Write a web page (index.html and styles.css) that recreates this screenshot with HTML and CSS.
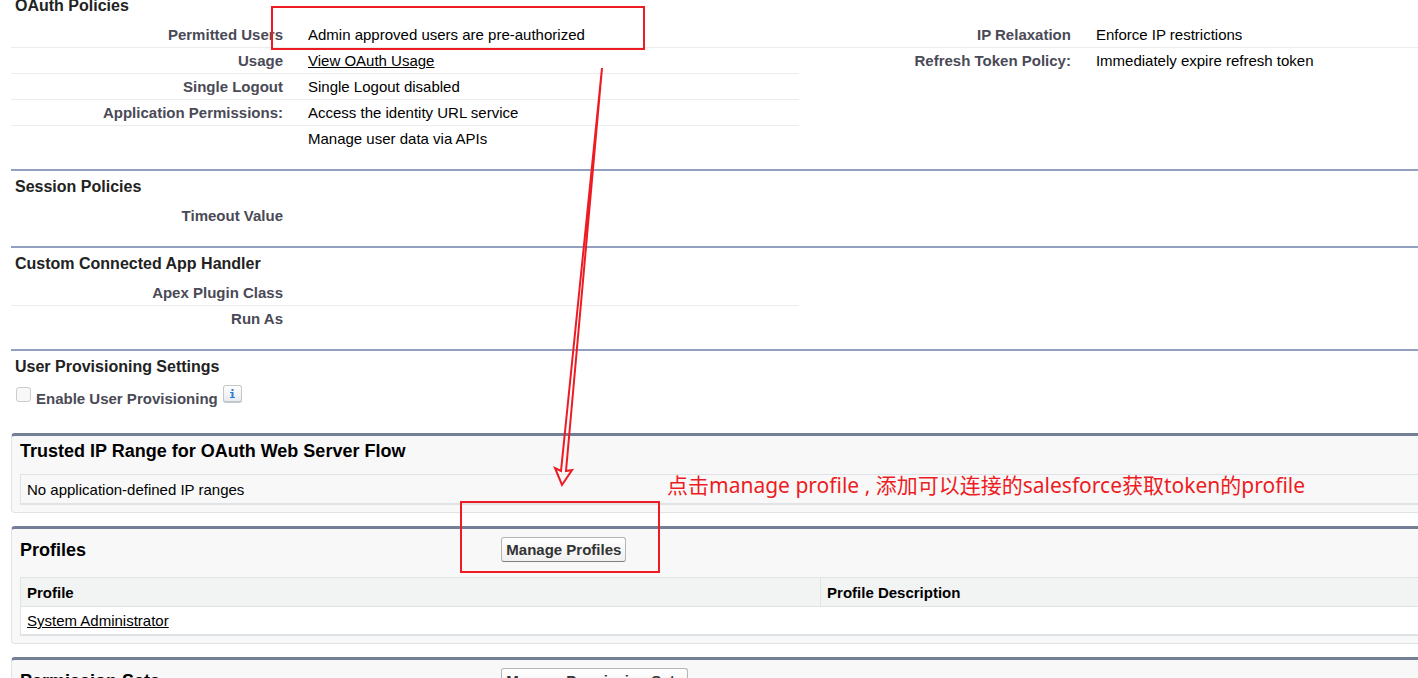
FILE: index.html
```html
<!DOCTYPE html>
<html lang="en">
<head>
<meta charset="utf-8">
<title>Connected App Detail</title>
<link rel="stylesheet" href="styles.css">
</head>
<body>
<main class="page">
  <section class="section">
    <h3 class="section-title">OAuth Policies</h3>
    <div class="columns">
      <dl class="details">
        <div class="row"><dt>Permitted Users</dt><dd>Admin approved users are pre-authorized</dd></div>
        <div class="row"><dt>Usage</dt><dd><a href="#usage">View OAuth Usage</a></dd></div>
        <div class="row"><dt>Single Logout</dt><dd>Single Logout disabled</dd></div>
        <div class="row"><dt>Application Permissions:</dt><dd>Access the identity URL service</dd></div>
        <div class="row"><dt></dt><dd>Manage user data via APIs</dd></div>
      </dl>
      <dl class="details">
        <div class="row"><dt>IP Relaxation</dt><dd>Enforce IP restrictions</dd></div>
        <div class="row"><dt>Refresh Token Policy:</dt><dd>Immediately expire refresh token</dd></div>
      </dl>
    </div>
  </section>

  <section class="section">
    <h3 class="section-title">Session Policies</h3>
    <div class="columns">
      <dl class="details">
        <div class="row"><dt>Timeout Value</dt><dd></dd></div>
      </dl>
    </div>
  </section>

  <section class="section">
    <h3 class="section-title">Custom Connected App Handler</h3>
    <div class="columns">
      <dl class="details">
        <div class="row"><dt>Apex Plugin Class</dt><dd></dd></div>
        <div class="row"><dt>Run As</dt><dd></dd></div>
      </dl>
    </div>
  </section>

  <section class="section section-last">
    <h3 class="section-title">User Provisioning Settings</h3>
    <div class="provisioning">
      <input class="check" type="checkbox" id="provisioning" disabled>
      <label class="check-label" for="provisioning">Enable User Provisioning</label>
      <button class="info" type="button" aria-label="Info">
        <svg width="5" height="9" viewBox="0 0 5 9" aria-hidden="true">
          <path d="M1.500 0h2v2h-2zM0 3h3.500v5H5v1H0V8h1.500V4H0z" fill="#2a7fd4"/>
        </svg>
      </button>
    </div>
  </section>

  <section class="panel">
    <h2 class="panel-title">Trusted IP Range for OAuth Web Server Flow</h2>
    <p class="empty">No application-defined IP ranges</p>
  </section>

  <section class="panel">
    <div class="panel-bar">
      <h2 class="panel-heading">Profiles</h2>
      <div><button class="btn" type="button">Manage Profiles</button></div>
    </div>
    <table class="list">
      <thead><tr><th class="col-name" scope="col">Profile</th><th scope="col">Profile Description</th></tr></thead>
      <tbody><tr><td><a href="#profile">System Administrator</a></td><td></td></tr></tbody>
    </table>
  </section>

  <section class="panel">
    <div class="panel-bar">
      <h2 class="panel-heading">Permission Sets</h2>
      <div><button class="btn" type="button">Manage Permission Sets</button></div>
    </div>
  </section>
</main>

<div class="mark mark-users"></div>
<div class="mark mark-profiles"></div>
<svg class="arrow" width="60" height="430" viewBox="0 0 60 430" aria-hidden="true">
  <path d="M52 8L11 411L5 408L12 425L22 410L16 411Z" fill="none" stroke="#ed1c24" stroke-width="2"/>
</svg>
<p class="note" lang="zh-CN">点击manage profile , 添加可以连接的salesforce获取token的profile</p>
</body>
</html>
```
FILE: styles.css
```css
* {
  box-sizing: border-box;
}

html {
  height: 100%;
  overflow: hidden;
}

body {
  position: relative;
  height: 100%;
  margin: 0;
  overflow: hidden;
  background: #fff;
  color: #000;
  font: 15px/18px "Liberation Sans", Arial, sans-serif;
}

h2, h3, p, dl, dd {
  margin: 0;
}

a {
  color: inherit;
}

.page {
  margin-top: -12px;
  padding-left: 11px;
}

.section {
  padding-bottom: 17px;
  border-top: 2px solid #929fc0;
}

.section-title {
  padding: 6px 4px;
  color: #222;
  font-size: 16px;
  line-height: 20px;
}

.columns {
  display: grid;
  grid-template-columns: 56% 1fr;
}

.row {
  display: grid;
  grid-template-columns: 272px 1fr;
  column-gap: 25px;
  min-height: 26px;
  padding: 4px 0 3px;
  border-bottom: 1px solid #ececec;
}

.row:last-child {
  border-bottom-color: transparent;
}

.row dt {
  color: #4a4a56;
  font-weight: bold;
  text-align: right;
}

.section-last {
  padding-bottom: 25px;
}

.provisioning {
  display: flex;
  align-items: flex-start;
  gap: 5px;
  padding: 2px 0 0 5px;
}

.check {
  appearance: none;
  width: 15px;
  height: 15px;
  margin: 2px 0 0;
  border: 1px solid #ccc;
  border-radius: 3px;
  background: #f8f8f8;
}

.check-label {
  padding-top: 5px;
  color: #4a4a56;
  font-weight: bold;
}

.info {
  display: flex;
  align-items: center;
  justify-content: center;
  width: 19px;
  height: 18px;
  padding: 0;
  border: 1px solid #c4c6ca;
  border-bottom-width: 2px;
  border-radius: 3px;
  background: linear-gradient(#fff, #e8ebf0);
}

.panel {
  margin-bottom: 13px;
  padding: 0 0 7px 8px;
  border: solid #e0e3e5;
  border-width: 3px 0 1px 1px;
  border-top-color: #747e96;
  border-radius: 4px 0 0 4px;
  background: #f8f8f8;
}

.panel-title {
  padding: 5px 0 13px;
  font-size: 18px;
  line-height: 20px;
}

.panel-bar {
  display: grid;
  grid-template-columns: 34% 1fr;
  align-items: center;
  height: 48px;
  padding-bottom: 7px;
}

.panel-heading {
  font-size: 18px;
  line-height: 20px;
}

.btn {
  display: block;
  height: 25px;
  margin-left: 6px;
  padding: 0 4px;
  border: 1px solid #b5b5b5;
  border-bottom-color: #7f7f7f;
  border-radius: 3px;
  background: linear-gradient(#fff, #f0f0f0);
  color: #333;
  font: bold 15px/18px "Liberation Sans", Arial, sans-serif;
}

.empty {
  padding: 6px 6px 4px;
  border: solid #e0e3e5;
  border-width: 1px 0 2px 1px;
}

.list {
  width: 100%;
  border: solid #e0e3e5;
  border-width: 1px 0 2px 1px;
  border-spacing: 0;
}

.col-name {
  width: 57.2%;
}

.list th {
  padding: 6px 6px 4px;
  border-bottom: 1px solid #e0e3e5;
  background: #f2f3f3;
  text-align: left;
}

.list th + th {
  border-left: 1px solid #e0e3e5;
}

.list td {
  padding: 5px 6px 4px;
  background: #fff;
}

.mark {
  position: absolute;
  border: 2px solid #ed1c24;
}

.mark-users {
  top: 6px;
  left: 271px;
  width: 374px;
  height: 44px;
}

.mark-profiles {
  top: 501px;
  left: 460px;
  width: 200px;
  height: 72px;
}

.arrow {
  position: absolute;
  top: 60px;
  left: 550px;
}

.note {
  position: absolute;
  top: 471px;
  left: 667px;
  color: #ed1c24;
  font: 21px/28px "Noto Sans", "Noto Sans CJK SC", sans-serif;
  white-space: nowrap;
}
```
